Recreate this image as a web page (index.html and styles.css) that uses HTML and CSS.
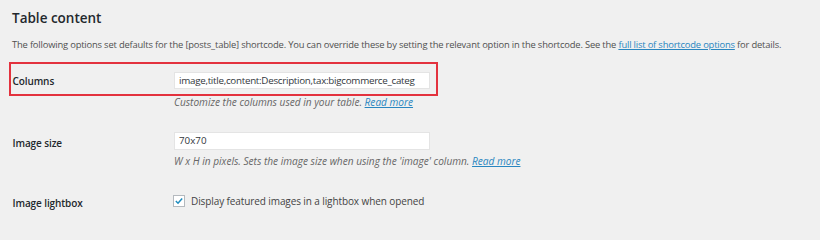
FILE: index.html
```html
<!DOCTYPE html>
<html lang="en">
<head>
<meta charset="utf-8">
<title>Table content</title>
<link rel="stylesheet" href="styles.css">
</head>
<body>
<div class="wrap">
  <h2 class="section-title">Table content</h2>
  <p class="section-desc">The following options set defaults for the [posts_table] shortcode. You can override these by setting the relevant option in the shortcode. See the <a href="#" class="link">full list of shortcode options</a> for details.</p>
  <div class="rows">
    <div class="row row-highlight">
      <div class="label label-columns">Columns</div>
      <div class="field field-columns">
        <div class="input">image,title,content:Description,tax:bigcommerce_categ</div>
      </div>
    </div>
    <div class="help help-first">Customize the columns used in your table. <a href="#" class="link">Read more</a></div>
    <div class="row row-image">
      <div class="label label-image">Image size</div>
      <div class="field">
        <div class="input input-tall">70x70</div>
        <div class="help help-second">W x H in pixels. Sets the image size when using the 'image' column. <a href="#" class="link">Read more</a></div>
      </div>
    </div>
    <div class="row row-lightbox">
      <div class="label label-lightbox">Image lightbox</div>
      <div class="field check-field">
        <span class="checkbox"><svg viewBox="0 0 12 12" width="10" height="10"><path d="M2.2 6.1 L4.8 8.7 L9.8 2.9" fill="none" stroke="#1e8cbe" stroke-width="1.8"/></svg></span>
        <span class="check-label">Display featured images in a lightbox when opened</span>
      </div>
    </div>
  </div>
</div>
</body>
</html>
```

FILE: styles.css
```css
html, body {
  margin: 0;
  padding: 0;
  background: #f0f0f0;
}
body {
  font-family: "Open Sans", "Noto Sans", sans-serif;
  color: #444;
  width: 820px;
  height: 228px;
  overflow: hidden;
}
.wrap {
  padding: 9px 0 0 12px;
}
.section-title {
  margin: 0;
  font-size: 13.5px;
  font-weight: 600;
  color: #23282d;
  line-height: 18px;
}
.section-desc {
  margin: 11px 0 0 0;
  font-size: 9.4px;
  letter-spacing: -0.18px;
  line-height: 14px;
  color: #505050;
  white-space: nowrap;
}
.link {
  color: #2a86c0;
  text-decoration: underline;
}
.rows {
  margin-top: 10px;
  margin-left: -3px;
}
.row {
  display: flex;
  align-items: flex-start;
  width: 425px;
  border: 2px solid transparent;
  border-top: 0;
  border-bottom: 0;
}
.label {
  box-sizing: border-box;
  width: 163px;
  flex: none;
  padding-left: 1.5px;
  font-size: 10px;
  letter-spacing: -0.1px;
  line-height: 14px;
  font-weight: 600;
  color: #23282d;
}
.row-highlight {
  height: 30px;
  border: 2px solid #e3323e;
}
.label-columns {
  padding-top: 10px;
}
.field {
  display: flex;
  flex-direction: column;
  flex: none;
}
.field-columns {
  padding-top: 8px;
}
.input {
  box-sizing: border-box;
  width: 256px;
  height: 17px;
  background: #fff;
  border: 1px solid #e4e4e4;
  padding: 0 4px;
  font-size: 9.8px;
  letter-spacing: -0.28px;
  line-height: 15px;
  color: #32373c;
  white-space: nowrap;
  overflow: hidden;
}
.input-tall {
  height: 18px;
  line-height: 16px;
  letter-spacing: 0;
}
.help {
  font-size: 10.1px;
  font-style: italic;
  color: #666;
  line-height: 12px;
  white-space: nowrap;
}
.help-first {
  margin: 0 0 0 165px;
}
.help-second {
  margin-top: 5px;
}
.row-image {
  margin-top: 24px;
}
.label-image {
  padding-top: 4px;
}
.row-lightbox {
  margin-top: 26px;
}
.label-lightbox {
  padding-top: 3px;
}
.check-field {
  flex-direction: row;
  align-items: center;
  height: 16px;
}
.checkbox {
  box-sizing: border-box;
  width: 12px;
  height: 12px;
  margin-left: -1px;
  background: #fff;
  border: 1px solid #b4b9be;
  display: flex;
  align-items: center;
  justify-content: center;
  margin-right: 6px;
}
.check-label {
  font-size: 10px;
  letter-spacing: -0.1px;
  line-height: 16px;
  color: #444;
}
```
